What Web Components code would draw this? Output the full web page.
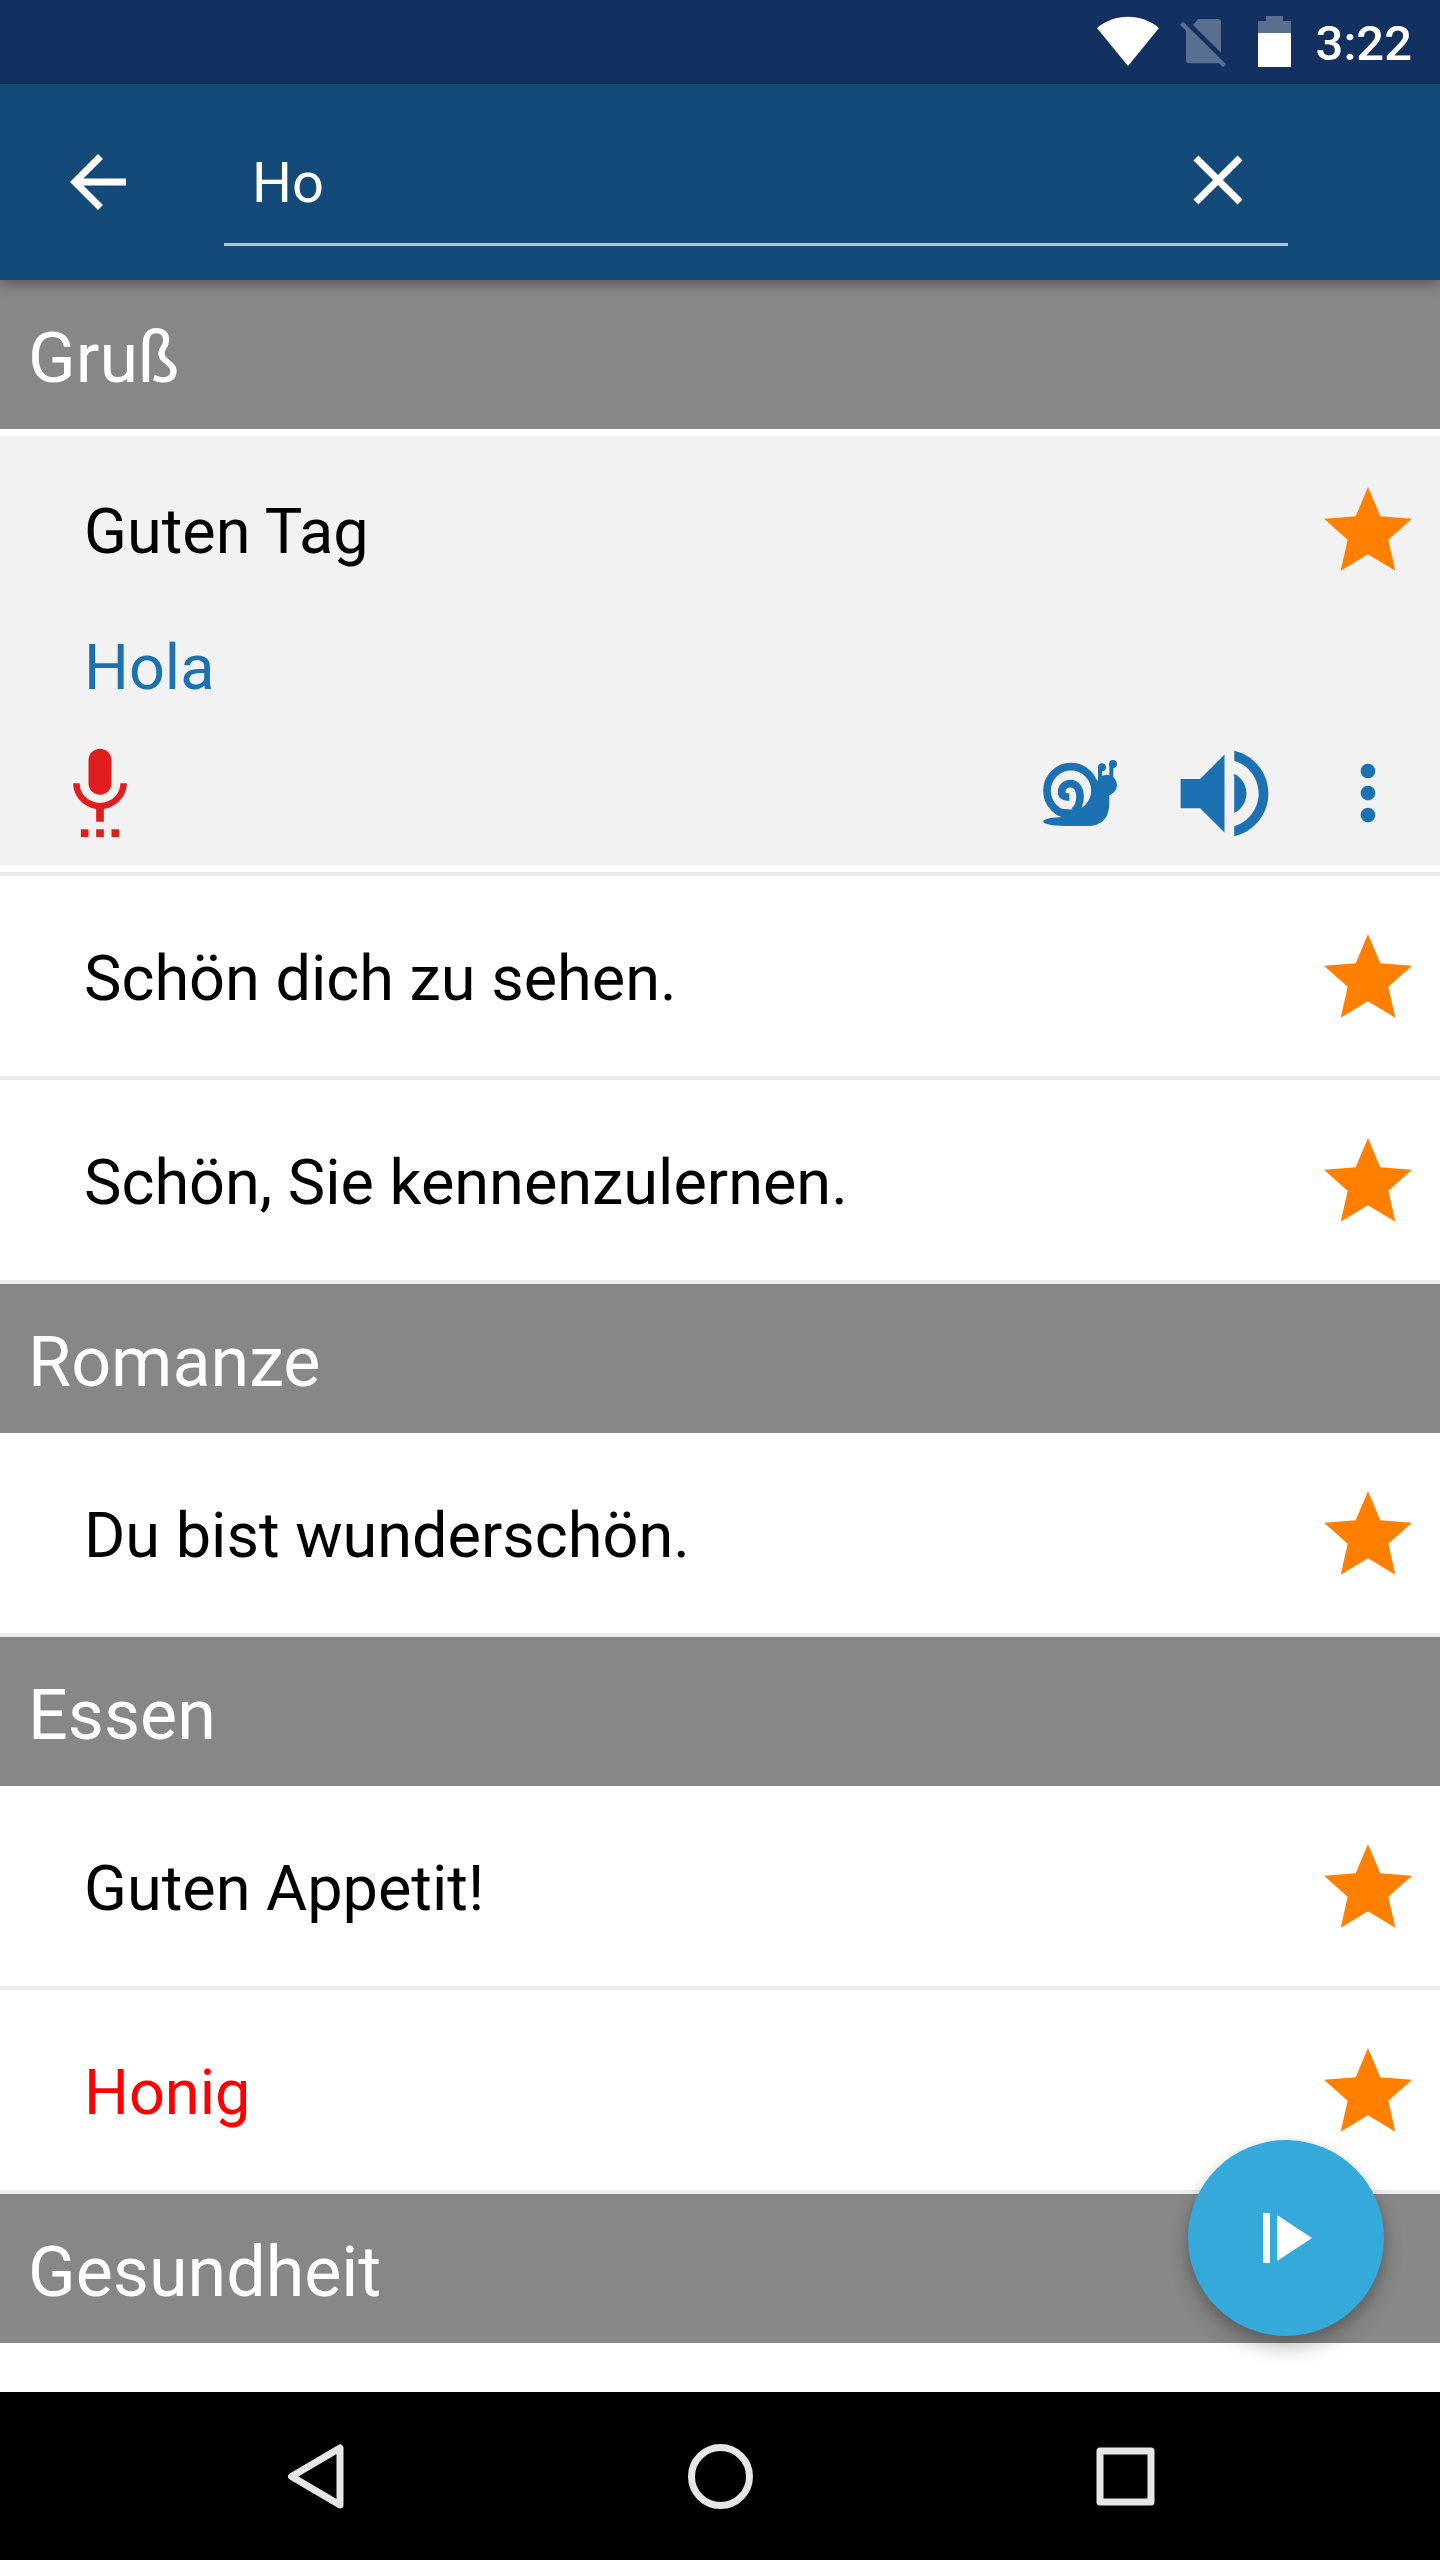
<!DOCTYPE html>
<html lang="de">
<head>
<meta charset="utf-8">
<meta name="viewport" content="width=device-width, initial-scale=1">
<title>Sprachführer</title>
<style>
html, body { margin: 0; }
body { font-family: Roboto, "Noto Sans", sans-serif; background: #fff; color: #000; }
</style>
</head>
<body>
<phrase-app></phrase-app>
<script>
const BUTTON = `
  button { appearance: none; border: 0; padding: 0; margin: 0; background: none; color: inherit; font: inherit;
    display: flex; align-items: center; justify-content: center; cursor: pointer; }
  svg { display: block; fill: currentColor; }`;

function define(name, css, html) {
  const template = document.createElement('template');
  template.innerHTML = `<style>:host { display: block; box-sizing: border-box; } * { box-sizing: border-box; } ${BUTTON} ${css}</style>${html}`;
  customElements.define(name, class extends HTMLElement {
    constructor() {
      super();
      this.attachShadow({ mode: 'open' }).append(template.content.cloneNode(true));
    }
  });
}

define('status-bar', `
  :host { display: flex; justify-content: flex-end; height: 84px; padding-right: 28px; background: #133160; color: #fff; }
  svg { flex: none; margin-top: 16px; }
  .wifi { margin-right: 21px; }
  .sim { margin-right: 32px; }
  .battery { margin-right: 25px; }
  time { font-size: 49px; font-weight: 500; line-height: 88px; }
`, `
  <svg class="wifi" width="62" height="52" viewBox="0 0 62 52" aria-hidden="true"><path d="M0 12C18-3 44-3 62 12L31 50Z"/></svg>
  <svg class="sim" width="46" height="52" viewBox="357 48 138 156" fill-opacity=".3" aria-hidden="true">
    <path d="M411 57H470q10 0 10 10V158L396 75Z"/><path d="M366 65L495 193L486 202L474 190H385q-10 0-10-10V92L357 74Z"/></svg>
  <svg class="battery" width="33" height="51" viewBox="0 0 33 51" aria-hidden="true">
    <path fill-opacity=".3" d="M8 0H25V5H33V17H0V5H8Z"/><path d="M0 17H33V51H0Z"/></svg>
  <time datetime="03:22">3:22</time>
`);

define('search-bar', `
  :host { display: flex; align-items: center; height: 196px; padding: 0 152px 0 56px; background: #144a78; color: #fff;
    position: relative; z-index: 1; box-shadow: 0 4px 12px rgba(0,0,0,.35); }
  .back { width: 84px; height: 84px; margin-right: 84px; flex: none; }
  .field { flex: 1; display: flex; align-items: center; height: 132px; margin-bottom: 4px; padding: 3px 28px 0;
    border-bottom: 3px solid #b4c2d1; }
  input { flex: 1; min-width: 0; appearance: none; border: 0; outline: 0; margin: 0; padding: 6px 0 0; background: none;
    color: inherit; font: inherit; font-size: 56px; line-height: 72px; }
`, `
  <button class="back" aria-label="Zurück"><svg width="84" height="84" viewBox="0 0 24 24"><path d="M20 11H7.83l5.59-5.59L12 4l-8 8 8 8 1.41-1.41L7.83 13H20v-2z"/></svg></button>
  <div class="field">
    <input type="text" aria-label="Suche" value="Ho">
    <button aria-label="Löschen"><svg width="84" height="84" viewBox="0 0 24 24"><path d="M19 6.41L17.59 5 12 10.59 6.41 5 5 6.41 10.59 12 5 17.59 6.41 19 12 13.41 17.59 19 19 17.59 13.41 12z"/></svg></button>
  </div>
`);

define('category-header', `
  :host { height: 149px; padding: 7px 28px 0; background: #878787; color: #fff; }
  h2 { margin: 0; font-size: 70px; font-weight: 400; line-height: 143px; }
`, `<h2><slot></slot></h2>`);

define('favorite-button', `
  button { width: 144px; height: 88px; color: #ff8000; }
`, `<button aria-label="Favorit" aria-pressed="true"><svg width="88" height="88" viewBox="0 0 264 264">
  <path d="M132 6L169 94L264 101L193 164L214 257L132 208L50 257L71 164L0 101L95 94Z"/></svg></button>`);

define('phrase-row', `
  :host { border-bottom: 4px solid #ececec; background: #fff; font-size: 63px; }
  :host([tone="red"]) { color: #f00; }
  .main { display: flex; align-items: center; justify-content: space-between; height: 200px; padding-left: 84px; }
  p { margin: 0; padding-top: 6px; line-height: 82px; }
  :host([open]) .card { margin: 7px 0; background: #f2f2f2; }
  :host([open]) { display: flow-root; }
  :host([open]) .main { height: 186px; }
`, `<div class="card"><div class="main"><p><slot></slot></p><favorite-button></favorite-button></div><slot name="details"></slot></div>`);

define('phrase-details', `
  p { margin: 0; padding: 5px 84px 0; line-height: 82px; color: #1c71b3; }
  .actions { display: flex; align-items: center; height: 156px; padding: 12px 0 0 28px; color: #1c71b3; }
  button { width: 144px; height: 120px; }
  .mic { margin-right: auto; color: #e01e1e; padding-bottom: 4px; }
`, `
  <p><slot></slot></p>
  <div class="actions">
    <button class="mic" aria-label="Aufnehmen"><svg width="92" height="92" viewBox="0 0 24 24"><path d="M7 24h2v-2H7v2zm5-11c1.66 0 2.99-1.34 2.99-3L15 4c0-1.66-1.34-3-3-3S9 2.34 9 4v6c0 1.66 1.34 3 3 3zm-1 11h2v-2h-2v2zm4 0h2v-2h-2v2zm4-14h-1.7c0 3-2.54 5.1-5.3 5.1S6.7 13 6.7 10H5c0 3.41 2.72 6.23 6 6.72V20h2v-3.28c3.28-.49 6-3.31 6-6.72z"/></svg></button>
    <button aria-label="Langsam abspielen"><svg width="74" height="66" viewBox="129 1020 222 198">
      <g fill="none" stroke="currentColor" stroke-width="23">
        <circle cx="213" cy="1112" r="72"/>
        <path d="M222 1174C236 1162 240 1146 240 1130C240 1106 228 1091 211 1091C196 1091 185 1102 185 1116C185 1127 192 1131 208 1131"/>
      </g>
      <path d="M274 1112C275 1135 258 1160 235 1170L205 1168L150 1165C160 1180 172 1187 185 1191C160 1192 130 1196 130 1205C130 1213 165 1218 215 1218H260C305 1218 328 1196 328 1145V1100L289 1085Z"/>
      <circle cx="320" cy="1095" r="31"/>
      <circle cx="306" cy="1042" r="12"/><path d="M294 1042H306V1085H294Z"/>
      <circle cx="339" cy="1032" r="12"/><path d="M328 1032H340V1075H328Z"/></svg></button>
    <button aria-label="Abspielen"><svg width="117" height="117" viewBox="0 0 24 24"><path d="M3 9v6h4l5 5V4L7 9H3zm13.500 3c0-1.770-1.020-3.290-2.500-4.030v8.050c1.480-.73 2.500-2.250 2.500-4.020zM14 3.230v2.060c2.890.86 5 3.540 5 6.710s-2.110 5.850-5 6.710v2.060c4.010-.91 7-4.490 7-8.770s-2.990-7.860-7-8.770z"/></svg></button>
    <button aria-label="Mehr"><svg width="88" height="88" viewBox="0 0 24 24"><path d="M12 8c1.100 0 2-.9 2-2s-.9-2-2-2-2 .9-2 2 .9 2 2 2zm0 2c-1.100 0-2 .9-2 2s.9 2 2 2 2-.9 2-2-.9-2-2-2zm0 6c-1.100 0-2 .9-2 2s.9 2 2 2 2-.9 2-2-.9-2-2-2z"/></svg></button>
  </div>
`);

define('play-fab', `
  button { width: 196px; height: 196px; border-radius: 50%; background: #36a9db; color: #fff;
    box-shadow: 0 12px 20px rgba(0,0,0,.24), 0 2px 10px rgba(0,0,0,.12); }
`, `<button aria-label="Alle abspielen"><svg width="84" height="84" viewBox="0 0 84 84"><path d="M19 17H26V67H19ZM33 19L68 42L33 65Z"/></svg></button>`);

define('nav-bar', `
  :host { display: grid; grid-template-columns: repeat(3, 1fr); height: 168px; padding: 0 112px; background: #000; color: #e6e6e6; }
  svg { fill: none; stroke: currentColor; stroke-width: 7; stroke-linejoin: round; }
`, `
  <button aria-label="Zurück"><svg width="66" height="66" viewBox="0 0 66 66"><path d="M58 5V62L9.500 33.500Z"/></svg></button>
  <button aria-label="Startseite"><svg width="66" height="66" viewBox="0 0 66 66"><circle cx="33.500" cy="33.500" r="29"/></svg></button>
  <button aria-label="Übersicht"><svg width="66" height="66" viewBox="0 0 66 66"><rect x="8" y="8" width="51" height="51"/></svg></button>
`);

define('phrase-app', `
  :host { display: flex; flex-direction: column; min-height: 100vh; }
  main { flex: 1; position: relative; }
  play-fab { position: absolute; right: 56px; bottom: 56px; }
`, `
  <status-bar></status-bar>
  <search-bar></search-bar>
  <main>
    <category-header>Gruß</category-header>
    <phrase-row open>Guten Tag<phrase-details slot="details">Hola</phrase-details></phrase-row>
    <phrase-row>Schön dich zu sehen.</phrase-row>
    <phrase-row>Schön, Sie kennenzulernen.</phrase-row>
    <category-header>Romanze</category-header>
    <phrase-row>Du bist wunderschön.</phrase-row>
    <category-header>Essen</category-header>
    <phrase-row>Guten Appetit!</phrase-row>
    <phrase-row tone="red">Honig</phrase-row>
    <category-header>Gesundheit</category-header>
    <play-fab></play-fab>
  </main>
  <nav-bar></nav-bar>
`);
</script>
</body>
</html>
